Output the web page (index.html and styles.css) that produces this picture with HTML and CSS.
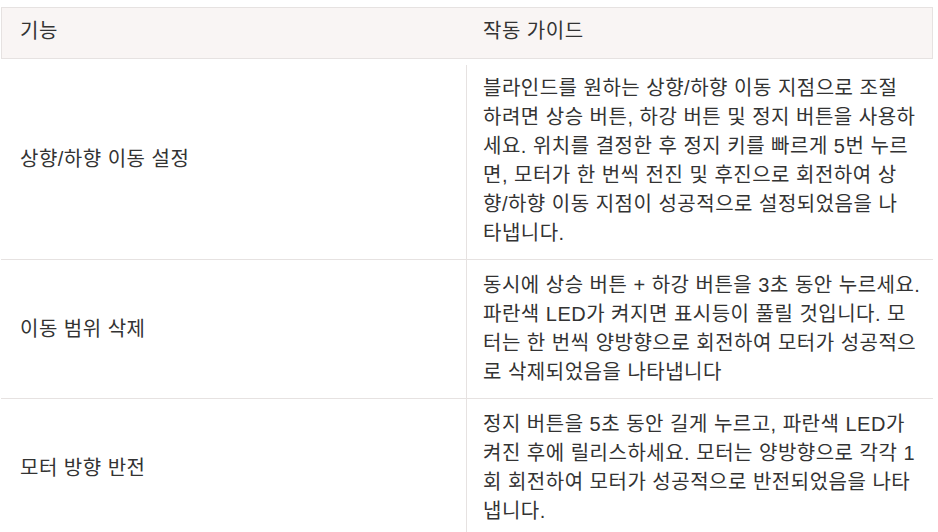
FILE: index.html
```html
<!DOCTYPE html>
<html lang="ko">
<head>
<meta charset="utf-8">
<link rel="stylesheet" href="styles.css">
</head>
<body>
<div class="table">
  <div class="head">
    <div class="hcell">기능</div>
    <div class="hcell">작동 가이드</div>
  </div>
  <div class="row first">
    <div class="name">상향/하향 이동 설정</div>
    <div class="desc">블라인드를 원하는 상향/하향 이동 지점으로 조절<br>하려면 상승 버튼, 하강 버튼 및 정지 버튼을 사용하<br>세요. 위치를 결정한 후 정지 키를 빠르게 5번 누르<br>면, 모터가 한 번씩 전진 및 후진으로 회전하여 상<br>향/하향 이동 지점이 성공적으로 설정되었음을 나<br>타냅니다.</div>
  </div>
  <div class="row">
    <div class="name">이동 범위 삭제</div>
    <div class="desc">동시에 상승 버튼 + 하강 버튼을 3초 동안 누르세요.<br>파란색 LED가 켜지면 표시등이 풀릴 것입니다. 모<br>터는 한 번씩 양방향으로 회전하여 모터가 성공적으<br>로 삭제되었음을 나타냅니다</div>
  </div>
  <div class="row">
    <div class="name">모터 방향 반전</div>
    <div class="desc">정지 버튼을 5초 동안 길게 누르고, 파란색 LED가<br>켜진 후에 릴리스하세요. 모터는 양방향으로 각각 1<br>회 회전하여 모터가 성공적으로 반전되었음을 나타<br>냅니다.</div>
  </div>
</div>
</body>
</html>
```
FILE: styles.css
```css
html, body { margin: 0; padding: 0; background: #fff; }
body {
  font-family: "Liberation Sans", "Noto Sans CJK KR", sans-serif;
  font-size: 20px;
  line-height: 29px;
  color: #333;
  letter-spacing: 0.5px;
}
.table {
  width: 932px;
  margin: 7px 0 0 1px;
}
.head {
  display: grid;
  grid-template-columns: 464px 1fr;
  background: #f9f5f4;
  border: 1px solid #e6e2e1;
  height: 50px;
  align-items: center;
}
.hcell { padding: 0 0 4px 18px; }
.hcell + .hcell { padding-left: 17px; }
.row {
  display: grid;
  grid-template-columns: 465px 1fr;
  border-top: 1px solid #e6e2e1;
}
.row.first { border-top: none; }
.name {
  padding-left: 19px;
  display: flex;
  align-items: center;
}
.desc {
  border-left: 1px solid #e6e2e1;
  padding: 11px 0 11px 16px;
  white-space: nowrap;
}
.row.first .desc {
  border-left: none;
  padding-top: 15px;
  padding-left: 17px;
  background: linear-gradient(#e6e2e1, #e6e2e1) no-repeat;
  background-size: 1px 100%;
  background-position: 0 6px;
}
```
